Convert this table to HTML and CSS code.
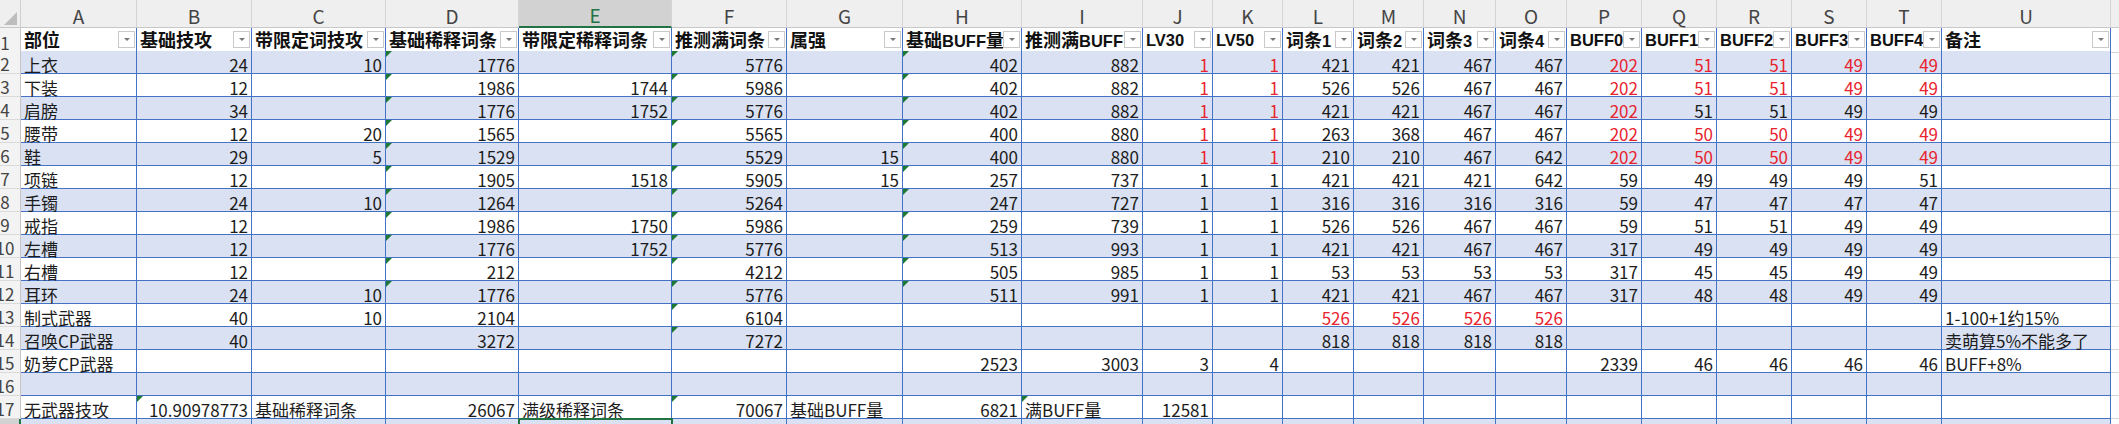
FILE: index.html
```html
<!DOCTYPE html>
<html lang="zh">
<head>
<meta charset="utf-8">
<title>Sheet</title>
<link rel="stylesheet" href="styles.css">
</head>
<body>
<div class="sheet" id="sheet"></div>
<script src="script.js"></script>
</body>
</html>
```

FILE: styles.css
```css
body {
  margin: 0;
  overflow: hidden;
  background: #fff;
  font-family: "Noto Sans CJK SC", "Liberation Sans", sans-serif;
  color: #1c1c1c;
}
.sheet {
  margin-left: -10px;
  width: 2150px;
}
.row {
  display: grid;
  grid-template-columns: 31px 116px 115px 134px 133px 153px 115px 116px 119px 121px 70px 70px 71px 70px 72px 71px 75px 75px 75px 75px 75px 169px 30px;
  height: 23px;
}
.colhdr {
  height: 28px;
  background: #efefef;
}
.corner {
  box-sizing: border-box;
  border-right: 1px solid #d0d0d0;
  border-bottom: 1px solid #c8c8c8;
  display: flex;
  justify-content: flex-end;
  align-items: flex-end;
  padding: 0 3px 2px 0;
}
.ch {
  box-sizing: border-box;
  border-right: 1px solid #d4d4d4;
  border-bottom: 1px solid #c8c8c8;
  display: flex;
  justify-content: center;
  align-items: flex-end;
  font-size: 19px;
  line-height: 22px;
  color: #444;
}
.chsel {
  background: #d2d2d2;
  color: #217346;
  border-bottom: 2px solid #217346;
}
.rh {
  box-sizing: border-box;
  border-right: 1px solid #c6c6c6;
  border-bottom: 1px solid #dadada;
  background: #f3f3f3;
  color: #444;
  font-size: 17px;
  line-height: 18px;
  display: flex;
  justify-content: center;
  align-items: flex-end;
}
.rhsel {
  background: #d2d2d2;
  color: #217346;
  border-right: 2px solid #217346;
}
.c {
  box-sizing: border-box;
  border-right: 1px solid #4472c4;
  border-bottom: 1px solid #4472c4;
  display: flex;
  align-items: flex-end;
  padding: 0 3px;
  font-size: 17px;
  line-height: 17px;
  white-space: nowrap;
  position: relative;
}
.band .c {
  background: #d9e1f2;
}
.num {
  justify-content: flex-end;
}
.red {
  color: #e8242f;
}
.tri::before {
  content: "";
  position: absolute;
  left: 0;
  top: 0;
  border-top: 6px solid #1e7a32;
  border-right: 6px solid transparent;
}
.hdr .c {
  border-bottom: 2px solid #4472c4;
  align-items: stretch;
  padding: 0 1px 0 3px;
  background: #fff;
}
.t {
  flex: 1;
  min-width: 0;
  overflow: hidden;
  display: flex;
  align-items: center;
  padding-top: 2px;
  font-family: "Liberation Sans", "Noto Sans CJK SC", sans-serif;
  font-weight: 700;
  font-size: 16.5px;
  line-height: 19px;
  color: #111;
}
.zh {
  font-family: "Noto Sans CJK SC", sans-serif;
  font-size: 18px;
}
.fb {
  flex: none;
  align-self: center;
  width: 17px;
  height: 17px;
  box-sizing: border-box;
  border: 1px solid #c9c9c9;
  background: #fff;
  display: flex;
  align-items: center;
  justify-content: center;
}
.fb::after {
  content: "";
  border-left: 3px solid transparent;
  border-right: 3px solid transparent;
  border-top: 3px solid #777;
}
.g {
  box-sizing: border-box;
  border-right: 1px solid #d4d4d4;
  border-bottom: 1px solid #d4d4d4;
}
.sel {
  outline: 2px solid #217346;
  outline-offset: -1px;
  z-index: 1;
}
```

FILE: script.js
```js
(function () {
  var W = document.getElementById('sheet');
  var L = "ABCDEFGHIJKLMNOPQRSTU".split('');
  var H = ["部位","基础技攻","带限定词技攻","基础稀释词条","带限定稀释词条","推测满词条","属强","基础BUFF量","推测满BUFF","LV30","LV50","词条1","词条2","词条3","词条4","BUFF0","BUFF1","BUFF2","BUFF3","BUFF4","备注"];
  var D = [
    ["上衣","24","10","^1776","","^5776","","^402","882","!1","!1","421","421","467","467","!202","!51","!51","!49","!49",""],
    ["下装","12","","^1986","1744","^5986","","^402","882","!1","!1","526","526","467","467","!202","!51","!51","!49","!49",""],
    ["肩膀","34","","^1776","1752","^5776","","^402","882","!1","!1","421","421","467","467","!202","51","51","49","49",""],
    ["腰带","12","20","^1565","","^5565","","^400","880","!1","!1","263","368","467","467","!202","!50","!50","!49","!49",""],
    ["鞋","29","5","^1529","","^5529","15","^400","880","!1","!1","210","210","467","642","!202","!50","!50","!49","!49",""],
    ["项链","12","","^1905","1518","^5905","15","^257","737","1","1","421","421","421","642","59","49","49","49","51",""],
    ["手镯","24","10","^1264","","^5264","","^247","727","1","1","316","316","316","316","59","47","47","47","47",""],
    ["戒指","12","","^1986","1750","^5986","","^259","739","1","1","526","526","467","467","59","51","51","49","49",""],
    ["左槽","12","","^1776","1752","^5776","","^513","993","1","1","421","421","467","467","317","49","49","49","49",""],
    ["右槽","12","","^212","","^4212","","^505","985","1","1","53","53","53","53","317","45","45","49","49",""],
    ["耳环","24","10","^1776","","^5776","","^511","991","1","1","421","421","467","467","317","48","48","49","49",""],
    ["制式武器","40","10","2104","","^6104","","","","","","!526","!526","!526","!526","","","","","","1-100+1约15%"],
    ["召唤CP武器","40","","3272","","^7272","","","","","","818","818","818","818","","","","","","卖萌算5%不能多了"],
    ["奶萝CP武器","","","","","","","2523","3003","3","4","","","","","2339","46","46","46","46","BUFF+8%"],
    [],
    ["无武器技攻","^10.90978773","基础稀释词条","26067","满级稀释词条","^70067","基础BUFF量","6821","^满BUFF量","12581"],
    []
  ];
  function el(tag, cls, txt) {
    var e = document.createElement(tag);
    if (cls) e.className = cls;
    if (txt != null) e.textContent = txt;
    return e;
  }
  var r = el('div', 'row colhdr');
  var corner = el('div', 'corner');
  corner.innerHTML = '<svg width="13" height="13" viewBox="0 0 13 13"><path d="M13 0L13 13L0 13Z" fill="#bdbdbd"/></svg>';
  r.appendChild(corner);
  L.forEach(function (c) { r.appendChild(el('div', 'ch' + (c === 'E' ? ' chsel' : ''), c)); });
  r.appendChild(el('div', 'ch', 'V'));
  W.appendChild(r);

  r = el('div', 'row hdr');
  r.appendChild(el('div', 'rh', '1'));
  H.forEach(function (h) {
    var c = el('div', 'c hc');
    var t = el('span', 't');
    var inner = el('span', 'tx');
    h.split(/([\u4e00-\u9fff]+)/).forEach(function (part) {
      if (!part) return;
      if (/[\u4e00-\u9fff]/.test(part)) inner.appendChild(el('span', 'zh', part));
      else inner.appendChild(document.createTextNode(part));
    });
    t.appendChild(inner);
    c.appendChild(t);
    c.appendChild(el('span', 'fb'));
    r.appendChild(c);
  });
  r.appendChild(el('div', 'g'));
  W.appendChild(r);

  D.forEach(function (row, i) {
    var n = i + 2;
    var rr = el('div', 'row ' + (n % 2 === 0 ? 'band' : 'plain'));
    rr.appendChild(el('div', 'rh' + (n === 18 ? ' rhsel' : ''), String(n)));
    for (var k = 0; k < 21; k++) {
      var v = row[k] || '';
      var cls = 'c';
      if (v.charAt(0) === '^') { cls += ' tri'; v = v.slice(1); }
      if (v.charAt(0) === '!') { cls += ' red'; v = v.slice(1); }
      if (/^[\d.]+$/.test(v)) cls += ' num';
      if (n === 18 && k === 4) cls += ' sel';
      rr.appendChild(el('div', cls, v));
    }
    rr.appendChild(el('div', 'g'));
    W.appendChild(rr);
  });
})();
```
